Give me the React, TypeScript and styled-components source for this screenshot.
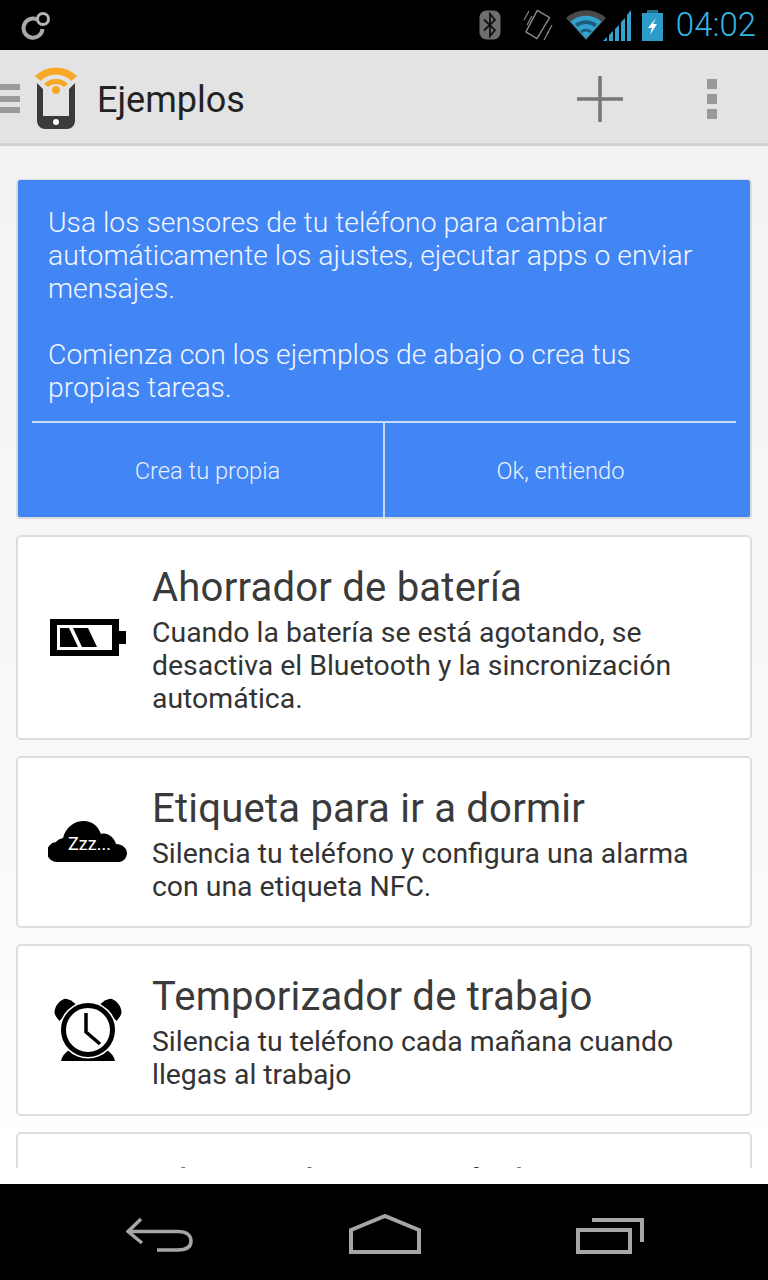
import React from 'react';
import styled, { createGlobalStyle } from 'styled-components';

const Global = createGlobalStyle`
  html, body { margin: 0; padding: 0; background: #000; }
  body { font-family: Roboto, "Liberation Sans", sans-serif; }
`;

const Screen = styled.div`
  width: 768px; height: 1280px; display: flex; flex-direction: column; overflow: hidden; background: #fff;
`;
const StatusBar = styled.div`
  height: 50px; flex: none; background: #000; display: flex; align-items: center; padding: 0 12px 0 20px;
`;
const StatusRight = styled.div`
  margin-left: auto; display: flex; align-items: center;
`;
const Gap = styled.span<{ $w: number }>`
  width: ${p => p.$w}px; flex: none;
`;
const Clock = styled.span`
  font-size: 33px; font-weight: 300; color: #33b5e5; margin-left: 13px; line-height: 50px;
`;
const ActionBar = styled.div`
  height: 96px; flex: none; box-sizing: border-box; background: #e3e3e3; border-bottom: 3px solid #d2d2d2;
  display: flex; align-items: center; padding-top: 4px;
`;
const Title = styled.div`
  font-size: 36px; color: #222; margin-left: 18px; font-weight: 400; padding-top: 2px;
`;
const BarActions = styled.div`
  margin-left: auto; display: flex; align-items: center; padding-right: 51px; gap: 84px;
`;
const Content = styled.div`
  height: 1022px; flex: none; overflow: hidden; padding: 33px 16px 0; display: flex; flex-direction: column; gap: 16px;
  background: linear-gradient(#f3f3f3, #fafafa 70%, #ffffff);
  box-sizing: border-box;
`;
const Spacer = styled.div`height: 16px; flex: none; background: #fff;`;
const Intro = styled.div`
  background: #4285f4; border: 2px solid #dcdcdc; border-top-width: 1px; border-radius: 4px; height: 340px; flex: none; box-sizing: border-box;
  padding: 26px 14px 0; display: flex; flex-direction: column;
`;
const IntroText = styled.p`
  margin: 0; padding: 0 0 0 16px; color: #f2f6fe; font-size: 28.3px; line-height: 33px; font-weight: 300; height: 215px; white-space: pre-line;
`;
const IntroButtons = styled.div`
  display: grid; grid-template-columns: 351px 353px; border-top: 2px solid #c6daf9; flex: 1;
`;
const IntroButton = styled.div<{ $divided?: boolean }>`
  display: flex; align-items: center; justify-content: center; color: #e8f0fe; font-size: 23.7px; font-weight: 300; padding-top: 2px;
  border-left: ${p => (p.$divided ? '2px solid #c6daf9' : 'none')};
`;
const Card = styled.div<{ $h: number }>`
  height: ${p => p.$h}px; flex: none; box-sizing: border-box; background: #fff; border: 2px solid #dedede; border-radius: 5px;
  display: flex; align-items: flex-start;
`;
const CardIcon = styled.div`
  width: 134px; box-sizing: border-box; padding-left: 6px; flex: none; align-self: center; display: flex; justify-content: center;
`;
const CardBody = styled.div`
  display: flex; flex-direction: column; padding-top: 28px;
`;
const CardTitle = styled.div`
  font-size: 40.1px; line-height: 46px; color: #3a3a3a; font-weight: 400; letter-spacing: 0.2px;
`;
const CardText = styled.div`
  font-size: 28.4px; line-height: 33px; color: #333; font-weight: 400; white-space: pre-line; margin-top: 5px;
`;
const NavBar = styled.div`
  height: 96px; flex: none; box-sizing: border-box; background: #000; display: flex; align-items: center; justify-content: space-between;
  padding: 4px 124px 0 126px;
`;
const MenuBars = styled.div`
  width: 20px; display: flex; flex-direction: column; gap: 5.5px; flex: none;
`;
const MenuBar = styled.div`
  height: 6px; background: #9a9a9a;
`;
const LogoSvg = styled.svg`
  margin: -3px 0 0 13px; flex: none;
`;
const WifiSvg = styled.svg`
  margin-right: -3px; flex: none;
`;
const CloudIcon = styled.div`
  position: relative; width: 80px; height: 44px;
`;
const CloudGraphic = styled.svg`
  display: block;
`;
const CloudText = styled.span`
  position: absolute; left: 20px; top: 14px; color: #fff; font-size: 18px; line-height: 20px; font-weight: 400;
`;

const Logo = () => (
  <svg width="32" height="32" viewBox="0 0 32 32">
    <path d="M17 10.5 A9.5 9.5 0 1 0 22.5 20" fill="none" stroke="#a9a9a9" strokeWidth="4" />
    <circle cx="23" cy="10" r="5.5" fill="none" stroke="#b5b5b5" strokeWidth="3" />
  </svg>
);
const BluetoothIcon = () => (
  <svg width="22" height="30" viewBox="0 0 22 30">
    <rect x="0.5" y="0.5" width="21" height="29" rx="7" fill="#6e6e6e" />
    <path d="M5 9.5 16 20 11 26V4l5 6L5 20.5" fill="none" stroke="#111" strokeWidth="1.8" />
  </svg>
);
const VibrateIcon = () => (
  <svg width="30" height="34" viewBox="0 0 30 34" fill="none" stroke="#8a8a8a">
    <path d="M14 1.5 28 9.5 13.5 33 1 25.5Z" strokeWidth="1.6" strokeLinejoin="round" transform="translate(2 1) scale(.88 .9)" />
    <path d="M1 12 6 3M4 17 9 8M29 17 24 26M26 23 21 32" strokeWidth="1.2" />
  </svg>
);
const WifiIcon = () => (
  <WifiSvg width="40" height="30" viewBox="0 0 40 30">
    <path d="M0 8 A30 30 0 0 1 40 8 L20 30Z" fill="#4a4a4a" />
    <path d="M4.5 11.5 A24 24 0 0 1 35.5 11.5 L20 29Z" fill="#33a2cf" />
    <path d="M9 14 A18 18 0 0 1 31 14 L28.5 17 A14 14 0 0 0 11.5 17Z" fill="#1c5f7c" />
    <path d="M14 21 A9 9 0 0 1 26 21 L24 23 A6 6 0 0 0 16 23Z" fill="#1c5f7c" />
  </WifiSvg>
);
const SignalIcon = () => (
  <svg width="28" height="32" viewBox="0 0 28 32">
    <path d="M0 32 4 28V32ZM6 26 10 22V32H6ZM12 20 16 16V32H12ZM18 13 22 9V32H18ZM24 6 28 1V32H24Z" fill="#33a2cf" />
  </svg>
);
const BatteryIcon = () => (
  <svg width="21" height="31" viewBox="0 0 21 31">
    <path d="M5 0H16V3H21V31H0V3H5Z" fill="#2e9cc9" />
    <path d="M5 0H16V3H5Z" fill="#1f6f90" />
    <path d="M14 8 6 18H10L8 25 15 14H11Z" fill="#fff" />
  </svg>
);
const Menu = () => (
  <MenuBars><MenuBar /><MenuBar /><MenuBar /></MenuBars>
);
const AppLogo = () => (
  <LogoSvg width="46" height="64" viewBox="0 0 46 64">
    <path d="M4 18V56a8 8 0 0 0 8 8H34a8 8 0 0 0 8-8V18L36 24V51H10V24Z" fill="#3a3a3a" />
    <circle cx="23" cy="57" r="3" fill="#fff" />
    <path d="M2 11 A30 30 0 0 1 44 11 L38.5 16 A22 22 0 0 0 7.5 16 Z" fill="#f9a825" />
    <path d="M11 19 A17 17 0 0 1 35 19 L31 22 A12 12 0 0 0 15 22Z" fill="#f9a825" />
    <circle cx="23" cy="25" r="4" fill="#f9a825" />
  </LogoSvg>
);
const Plus = () => (
  <svg width="46" height="46" viewBox="0 0 46 46"><path d="M23 0V46M0 23H46" stroke="#777" strokeWidth="3.5" /></svg>
);
const Overflow = () => (
  <svg width="10" height="40" viewBox="0 0 10 40" fill="#999">
    <rect width="10" height="10" /><rect y="15" width="10" height="10" /><rect y="30" width="10" height="10" />
  </svg>
);
const BatteryCard = () => (
  <svg width="76" height="38" viewBox="0 0 76 38">
    <path fillRule="evenodd" d="M0 0H69V37H0ZM7 6V31H62V6Z" fill="#000" />
    <rect x="69" y="12" width="7" height="13" fill="#000" />
    <path d="M10 9H19L28 28H10ZM23 9H38L47 28H32Z" fill="#000" />
  </svg>
);
const Cloud = () => (
  <CloudIcon>
    <CloudGraphic width="80" height="44" viewBox="0 0 80 44">
      <path d="M10 42A10 10 0 0 1 8 22 Q10 19 15 18 C18 7 26 1 36 1 C44 1 50 6 53 14 C59 12 66 17 68 24 C74 24 79 28 79 33 C79 38 75 42 71 42Z" fill="#000" />
    </CloudGraphic>
    <CloudText>Zzz...</CloudText>
  </CloudIcon>
);
const Alarm = () => (
  <svg width="68" height="64" viewBox="0 0 68 64">
    <path d="M0.5 14 C1 8 5 3 10 1 C13 0 18 3 21.5 6 L5.5 23 C3 20 0.5 17 0.5 14Z" fill="#000" />
    <path d="M67.5 14 C67 8 63 3 58 1 C55 0 50 3 46.5 6 L62.5 23 C65 20 67.5 17 67.5 14Z" fill="#000" />
    <path d="M7 63 C8 58 11 55 15 52 H53 C57 55 60 58 61 63Z" fill="#000" />
    <circle cx="34" cy="32" r="28.5" fill="#fff" />
    <circle cx="34" cy="32" r="24.5" fill="#fff" stroke="#000" strokeWidth="5" />
    <path d="M32 15V34L46 46" fill="none" stroke="#000" strokeWidth="3.5" />
  </svg>
);
const Back = () => (
  <svg width="67" height="40" viewBox="0 0 67 40" fill="none" stroke="#a6a6a6" strokeWidth="3.5">
    <path d="M15 5 2 17.5 16 29" />
    <path d="M2 17.5H52C60 17.5 65 21 65 27C65 33 60 36 52 36H31" />
  </svg>
);
const Home = () => (
  <svg width="74" height="40" viewBox="0 0 74 40" fill="none" stroke="#a6a6a6" strokeWidth="4">
    <path d="M3 16 37 2 71 16V38H3Z" />
  </svg>
);
const Recent = () => (
  <svg width="68" height="40" viewBox="0 0 68 40" fill="none" stroke="#a6a6a6" strokeWidth="4">
    <path d="M16 6H66V28" />
    <rect x="2" y="16" width="52" height="22" />
  </svg>
);

export default function App() {
  return (
    <Screen>
      <Global />
      <StatusBar>
        <Logo />
        <StatusRight>
          <BluetoothIcon />
          <Gap $w={22} />
          <VibrateIcon />
          <Gap $w={13} />
          <WifiIcon />
          <SignalIcon />
          <Gap $w={11} />
          <BatteryIcon />
          <Clock>04:02</Clock>
        </StatusRight>
      </StatusBar>
      <ActionBar>
        <Menu />
        <AppLogo />
        <Title>Ejemplos</Title>
        <BarActions>
          <Plus />
          <Overflow />
        </BarActions>
      </ActionBar>
      <Content>
        <Intro>
          <IntroText>{'Usa los sensores de tu teléfono para cambiar\nautomáticamente los ajustes, ejecutar apps o enviar\nmensajes.\n\nComienza con los ejemplos de abajo o crea tus\npropias tareas.'}</IntroText>
          <IntroButtons>
            <IntroButton>Crea tu propia</IntroButton>
            <IntroButton $divided>Ok, entiendo</IntroButton>
          </IntroButtons>
        </Intro>
        <Card $h={205}>
          <CardIcon><BatteryCard /></CardIcon>
          <CardBody>
            <CardTitle>Ahorrador de batería</CardTitle>
            <CardText>{'Cuando la batería se está agotando, se\ndesactiva el Bluetooth y la sincronización\nautomática.'}</CardText>
          </CardBody>
        </Card>
        <Card $h={172}>
          <CardIcon><Cloud /></CardIcon>
          <CardBody>
            <CardTitle>Etiqueta para ir a dormir</CardTitle>
            <CardText>{'Silencia tu teléfono y configura una alarma\ncon una etiqueta NFC.'}</CardText>
          </CardBody>
        </Card>
        <Card $h={172}>
          <CardIcon><Alarm /></CardIcon>
          <CardBody>
            <CardTitle>Temporizador de trabajo</CardTitle>
            <CardText>{'Silencia tu teléfono cada mañana cuando\nllegas al trabajo'}</CardText>
          </CardBody>
        </Card>
        <Card $h={172}>
          <CardIcon />
          <CardBody>
            <CardTitle>Alarma de automóvil</CardTitle>
          </CardBody>
        </Card>
      </Content>
      <Spacer />
      <NavBar>
        <Back />
        <Home />
        <Recent />
      </NavBar>
    </Screen>
  );
}
